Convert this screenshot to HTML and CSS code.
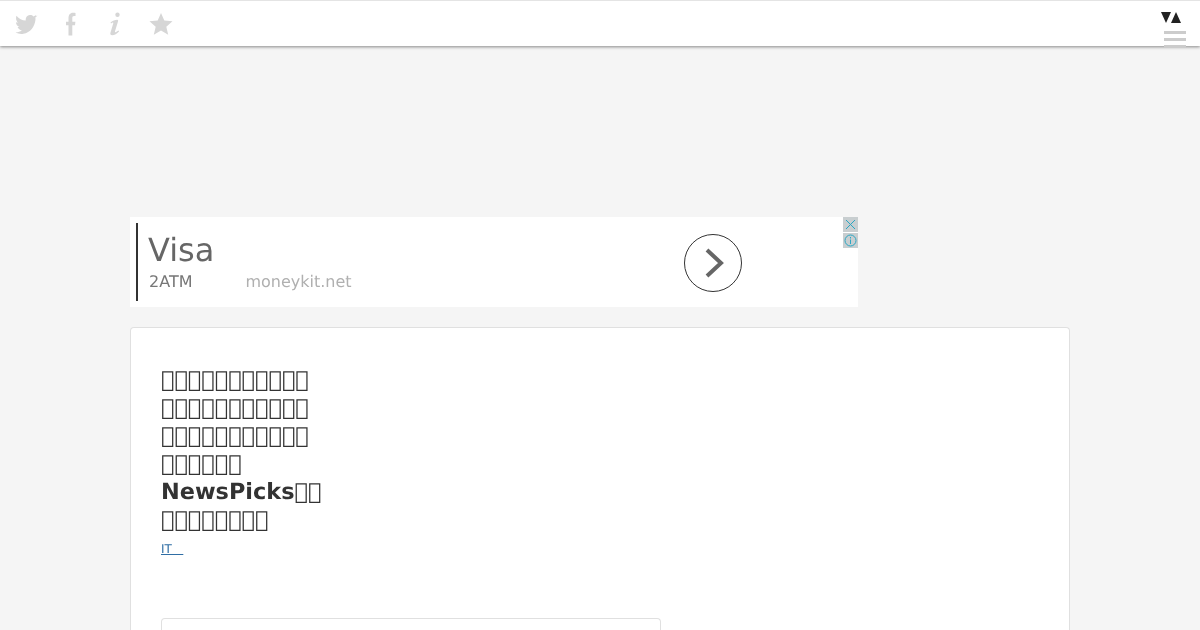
FILE: index.html
```html
<!DOCTYPE html>
<html lang="ja">
<head>
    <meta charset="UTF-8">
    <meta name="viewport" content="width=device-width, initial-scale=1.0">
    <title>NewsPicks</title>
    <link rel="stylesheet" href="styles.css">
</head>
<body>
    <!-- Top bar -->
    <header class="topbar">
        <div class="share-icons">
            <svg class="icon icon-bird" viewBox="0 0 24 24"><path d="M23.500 3.200c-.8.900-1.600 1.500-2.500 1.800.5 1 .6 2 .4 3.200-.7 6.300-5 12.300-12 13.600-2.800.5-5.400 0-7.900-1.500 2.500.1 4.500-.5 6.400-2-2.100-.2-3.500-1.300-4.300-3.300.7.100 1.300.1 2-.1-2.300-.8-3.500-2.400-3.700-4.700.7.300 1.300.5 2 .5C2.300 9.200 1.600 6.700 2.400 3.700c2.600 3 5.700 4.600 9.300 4.900-.3-2.900 1.300-5.400 4.100-5.600 1.500-.1 2.700.4 3.600 1.400 1.100-.2 2.100-.6 3-1.300-.3 1.100-.9 1.900-1.800 2.500.9-.1 1.700-.4 2.900-2.400z"/></svg>
            <svg class="icon icon-narrow" viewBox="0 0 12 24"><path d="M3.500 23.500V13.200H1V9.800h2.500V6.500C3.500 3 5 .8 8 .8c1 0 1.900.1 2.500.3v3h-1.400c-1.400 0-1.800.8-1.800 2.200v3.500h3.100l-.4 3.400H7.300v10.300z"/></svg>
            <svg class="icon icon-mid" viewBox="0 0 14 24"><circle cx="9.500" cy="2.700" r="2.200"/><path d="M2.500 10.500C4.800 8.800 7 7.800 9.200 7.800c.9 0 1.100.8.800 1.800l-3 9.700c-.2.900.3 1.100 1.100.6l2.300-1.500.7 1.100c-2.300 2.200-4.500 3.700-7 3.700-1.600 0-2.100-1-1.600-2.600l2.800-9.300c.2-.9-.3-1.100-1.100-.6l-1.200.8z"/></svg>
            <svg class="icon" viewBox="0 0 24 24"><path d="M12 1l3.300 7.500 8.200.8-6.200 5.400 1.900 8.100L12 18.500l-7.200 4.300 1.900-8.100L.5 9.300l8.200-.8z"/></svg>
        </div>
        <div class="menu-box">
            <div class="sort-arrows"><span class="arrow-down"></span><span class="arrow-up"></span></div>
            <div class="hamburger"><span></span><span></span><span></span></div>
        </div>
    </header>

    <main class="page">
        <!-- Ad -->
        <div class="ad">
            <div class="ad-text">
                <div class="ad-title">Visa</div>
                <div class="ad-sub"><span class="ad-desc">2ATM</span><span class="ad-site">moneykit.net</span></div>
            </div>
            <div class="ad-go">
                <svg viewBox="0 0 20 32" class="ad-chevron"><path d="M3 3l14 13L3 29"/></svg>
            </div>
            <div class="ad-tools">
                <span class="ad-tool"><svg viewBox="0 0 15 15"><path d="M3 3l9 9M12 3l-9 9"/></svg></span>
                <span class="ad-tool"><svg viewBox="0 0 15 15"><circle cx="7.500" cy="7.500" r="5.500"/><path d="M7.500 6.500v4.500M7.500 4v1.500"/></svg></span>
            </div>
        </div>

        <!-- Article -->
        <article class="card">
            <h1 class="headline">
                <span class="line">&#xE000;&#xE000;&#xE000;&#xE000;&#xE000;&#xE000;&#xE000;&#xE000;&#xE000;&#xE000;&#xE000;</span>
                <span class="line">&#xE000;&#xE000;&#xE000;&#xE000;&#xE000;&#xE000;&#xE000;&#xE000;&#xE000;&#xE000;&#xE000;</span>
                <span class="line">&#xE000;&#xE000;&#xE000;&#xE000;&#xE000;&#xE000;&#xE000;&#xE000;&#xE000;&#xE000;&#xE000;</span>
                <span class="line">&#xE000;&#xE000;&#xE000;&#xE000;&#xE000;&#xE000;</span>
                <span class="line">NewsPicks&#xE000;&#xE000;</span>
                <span class="line">&#xE000;&#xE000;&#xE000;&#xE000;&#xE000;&#xE000;&#xE000;&#xE000;</span>
            </h1>
            <a class="category" href="#">IT&nbsp;&nbsp;&nbsp;</a>
            <div class="inner-box"></div>
        </article>
    </main>
</body>
</html>
```

FILE: styles.css
```css
html, body { height: 630px; overflow: hidden; }
body { margin: 0; background-color: #f5f5f5; font-family: "DejaVu Sans", sans-serif; color: #333; text-rendering: geometricPrecision; }

.topbar { display: flex; justify-content: space-between; height: 45px; background-color: #fff; border-top: 1px solid #e4e4e4; box-shadow: 0 1px 3px rgba(0,0,0,.45); }
.share-icons { display: flex; align-items: flex-start; padding: 11px 0 0 14px; }
.icon { width: 24px; height: 24px; fill: #d6d6d6; filter: blur(.5px); }
.icon-bird { margin-right: 27px; }
.icon-narrow { width: 12px; margin-right: 31px; }
.icon-mid { width: 14px; margin-right: 27px; }
.menu-box { display: flex; flex-direction: column; align-items: flex-end; width: 26px; padding: 11px 14px 0 0; }
.sort-arrows { display: flex; margin-right: 5px; }
.arrow-down { border-left: 5.5px solid transparent; border-right: 5.5px solid transparent; border-top: 11px solid #222; }
.arrow-up { border-left: 5.5px solid transparent; border-right: 5.5px solid transparent; border-bottom: 11px solid #222; }
.hamburger { display: flex; flex-direction: column; gap: 4px; margin-top: 8px; filter: blur(.4px); }
.hamburger span { display: block; width: 22px; height: 3px; background-color: #ccc; }

/* own layer, so the text gets grey antialiasing like the reference */
.page { box-sizing: border-box; width: 940px; height: 584px; margin: 0 auto; padding-top: 171px; will-change: transform; }

.ad { position: relative; display: flex; align-items: center; justify-content: space-between; box-sizing: border-box; width: 728px; height: 90px; padding: 6px 116px 6px 6px; background-color: #fff; }
.ad-text { flex: 1; height: 78px; border-left: 2px solid #333; padding-left: 10px; color: #777; }
.ad-title { font-size: 32px; line-height: 40px; margin-top: 7px; color: #666; }
.ad-sub { display: flex; gap: 53px; margin-top: 2px; font-size: 16px; line-height: 20px; padding-left: 1px; }
.ad-site { color: #b0b0b0; }
.ad-go { display: flex; align-items: center; justify-content: center; box-sizing: border-box; width: 58px; height: 58px; margin-top: 2px; border: 1px solid #333; border-radius: 50%; }
.ad-chevron { width: 20px; height: 32px; margin-left: 2px; fill: none; stroke: #666; stroke-width: 4; }
.ad-tools { position: absolute; top: 0; right: 0; display: flex; flex-direction: column; gap: 1px; }
.ad-tool { display: block; width: 15px; height: 15px; background-color: #c8ced0; }
.ad-tool svg { display: block; fill: none; stroke: #2aa7c4; stroke-width: 1; }

.card { box-sizing: border-box; height: 303px; margin-top: 20px; padding: 38px 30px 0; background-color: #fff; border: 1px solid #e0e0e0; border-bottom: none; border-radius: 4px 4px 0 0; }
.headline { margin: 0; font-size: 22.4px; line-height: 28px; }
.line { display: block; }
.category { display: block; margin-top: 5px; font-size: 12px; line-height: 20px; color: #2f6ea5; }
.inner-box { box-sizing: border-box; width: 500px; height: 12px; margin-top: 59px; border: 1px solid #e0e0e0; border-bottom: none; border-radius: 4px 4px 0 0; }
```
